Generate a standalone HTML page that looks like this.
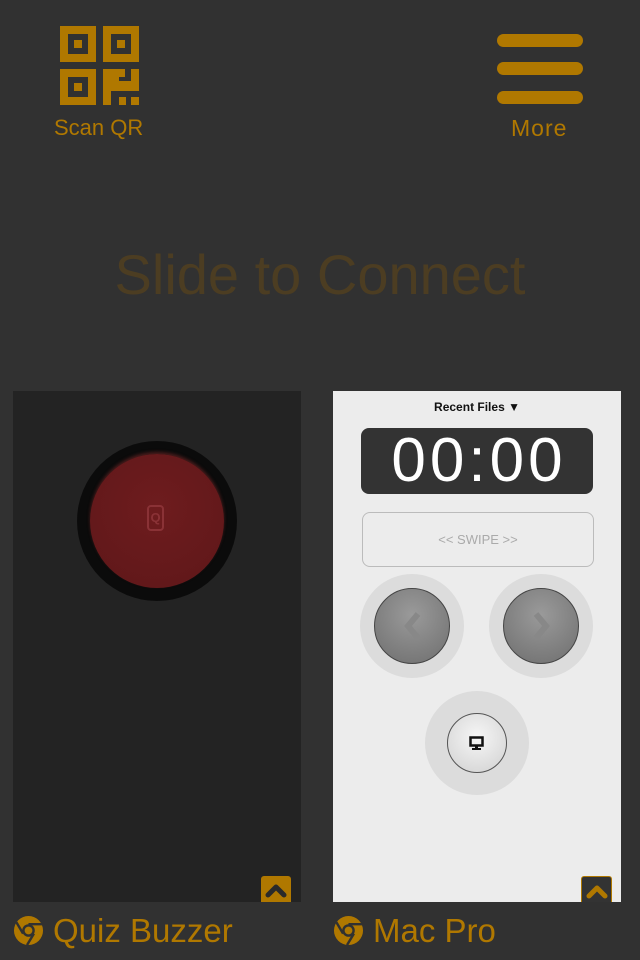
<!DOCTYPE html>
<html><head><meta charset="utf-8"><style>
body{margin:0;width:640px;height:960px;background:#313131;position:relative;overflow:hidden;font-family:"Liberation Sans",sans-serif}
.a{position:absolute}
.gold{color:#b07800}
.bar{position:absolute;left:497px;width:86px;height:13px;border-radius:7px;background:#b07800}
</style></head><body>
<svg class="a" style="left:60px;top:26px" width="80" height="80" viewBox="0 0 80 80">
<g fill="none" stroke="#b07800" stroke-width="8">
<rect x="4" y="4" width="28" height="28"/><rect x="47" y="4" width="28" height="28"/><rect x="4" y="47" width="28" height="28"/></g>
<g fill="#b07800"><rect x="14" y="14" width="8" height="8"/><rect x="57" y="14" width="8" height="8"/><rect x="14" y="57" width="8" height="8"/>
<rect x="43" y="43" width="8" height="36"/><rect x="43" y="43" width="22" height="8"/><rect x="51" y="51" width="8" height="14"/><rect x="59" y="55" width="20" height="10"/><rect x="71" y="43" width="8" height="12"/><rect x="59" y="71" width="7" height="8"/><rect x="71" y="71" width="8" height="8"/></g>
</svg>
<div class="a gold" style="left:54px;top:115px;font-size:22px">Scan QR</div>
<div class="bar" style="top:34px"></div><div class="bar" style="top:62px"></div><div class="bar" style="top:91px"></div>
<div class="a gold" style="left:511px;top:115px;font-size:23px;letter-spacing:1px">More</div>
<div class="a" style="left:0;width:640px;top:242px;text-align:center;font-size:56px;color:#4c3d22;font-weight:300">Slide to Connect</div>

<div class="a" style="left:13px;top:391px;width:288px;height:511px;background:#232323"></div>
<div class="a" style="left:77px;top:441px;width:160px;height:160px;border-radius:50%;background:radial-gradient(circle,#0b0b0b 70%,#141414 85%,#232323 100%)"></div>
<div class="a" style="left:90px;top:454px;width:134px;height:134px;border-radius:50%;background:radial-gradient(circle at 50% 40%,#6e1c1e,#5e1719);box-shadow:0 -2px 3px rgba(120,40,40,.6)"></div>
<div class="a" style="left:147px;top:505px;width:17px;height:26px;border:2px solid #8a3236;border-radius:4px;box-sizing:border-box;color:#8a3236;font-size:13px;text-align:center;line-height:22px;font-weight:bold">Q</div>
<div class="a" style="left:261px;top:876px;width:30px;height:26px;background:#b07800;border-radius:3px 3px 0 0"><svg width="30" height="26"><path d="M7 19 L15 11 L23 19" stroke="#2a2a2a" stroke-width="5" fill="none" stroke-linecap="round" stroke-linejoin="round"/></svg></div>

<div class="a" style="left:333px;top:391px;width:288px;height:511px;background:#ececec"></div>
<div class="a" style="left:333px;top:400px;width:288px;text-align:center;font-size:12px;font-weight:bold;color:#111">Recent Files ▼</div>
<div class="a" style="left:361px;top:428px;width:232px;height:66px;background:#333;border-radius:8px;color:#fff;font-size:62px;text-align:center;line-height:66px;letter-spacing:4px;text-indent:4px">00:00</div>
<div class="a" style="left:362px;top:512px;width:232px;height:55px;border:1px solid #bbb;border-radius:8px;box-sizing:border-box;color:#aaa;font-size:13px;text-align:center;line-height:53px">&lt;&lt; SWIPE &gt;&gt;</div>
<div class="a" style="left:360px;top:574px;width:104px;height:104px;border-radius:50%;background:#dcdcdc"></div>
<div class="a" style="left:374px;top:588px;width:74px;height:74px;border-radius:50%;background:radial-gradient(circle at 50% 35%,#9a9a9a,#6e6e6e);border:1px solid #444"></div>
<svg class="a" style="left:374px;top:588px" width="76" height="76"><path d="M44 26 L34 38 L44 50" stroke="#888" stroke-width="6" fill="none"/></svg>
<div class="a" style="left:489px;top:574px;width:104px;height:104px;border-radius:50%;background:#dcdcdc"></div>
<div class="a" style="left:503px;top:588px;width:74px;height:74px;border-radius:50%;background:radial-gradient(circle at 50% 35%,#9a9a9a,#6e6e6e);border:1px solid #444"></div>
<svg class="a" style="left:503px;top:588px" width="76" height="76"><path d="M33 26 L43 38 L33 50" stroke="#888" stroke-width="6" fill="none"/></svg>
<div class="a" style="left:425px;top:691px;width:104px;height:104px;border-radius:50%;background:#dcdcdc"></div>
<div class="a" style="left:447px;top:713px;width:58px;height:58px;border-radius:50%;background:radial-gradient(circle at 50% 40%,#f6f6f6,#d0d0d0);border:1px solid #555"></div>
<svg class="a" style="left:469px;top:736px" width="16" height="16"><rect x="1.5" y="1.5" width="12" height="8" fill="none" stroke="#111" stroke-width="2.5"/><rect x="6" y="10" width="3" height="2" fill="#111"/><rect x="3" y="12" width="9" height="2" fill="#111"/></svg>
<div class="a" style="left:581px;top:876px;width:31px;height:26px;background:#333;border:1px solid #b07800;border-bottom:none;border-radius:3px 3px 0 0;box-sizing:border-box"><svg width="30" height="26"><path d="M7 19 L15 11 L23 19" stroke="#b07800" stroke-width="5" fill="none" stroke-linecap="round" stroke-linejoin="round"/></svg></div>

<svg class="a" style="left:13px;top:915px" width="31" height="31" viewBox="0 0 32 32"><circle cx="16" cy="16" r="15" fill="#b07800"/><circle cx="16" cy="16" r="6.5" fill="#313131"/><circle cx="16" cy="16" r="4" fill="#b07800"/><path d="M16 9.5 L30 9.5 M10.4 19.2 L3.5 7.5 M21.6 19.2 L14.5 31" stroke="#313131" stroke-width="2.5"/></svg>
<div class="a gold" style="left:53px;top:912px;font-size:33px">Quiz Buzzer</div>
<svg class="a" style="left:333px;top:915px" width="31" height="31" viewBox="0 0 32 32"><circle cx="16" cy="16" r="15" fill="#b07800"/><circle cx="16" cy="16" r="6.5" fill="#313131"/><circle cx="16" cy="16" r="4" fill="#b07800"/><path d="M16 9.5 L30 9.5 M10.4 19.2 L3.5 7.5 M21.6 19.2 L14.5 31" stroke="#313131" stroke-width="2.5"/></svg>
<div class="a gold" style="left:373px;top:912px;font-size:33px">Mac Pro</div>
</body></html>
